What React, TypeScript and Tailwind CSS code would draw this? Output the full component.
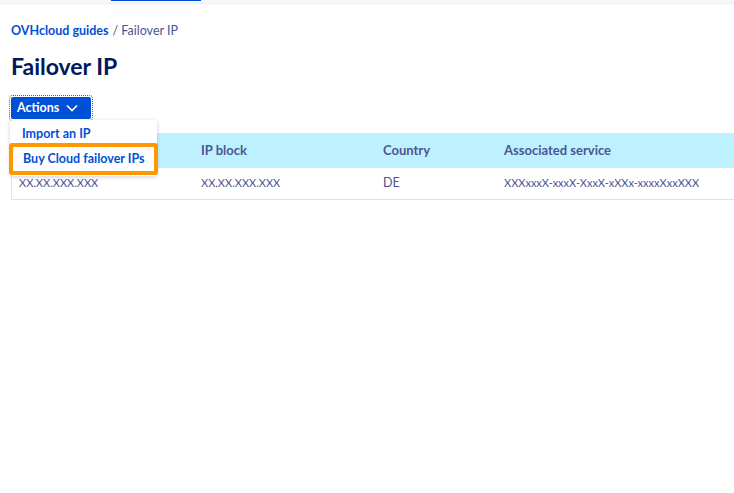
import React from "react";

const cols = [
  { label: "IP", w: "w-[182px]" },
  { label: "IP block", w: "w-[182px]" },
  { label: "Country", w: "w-[121px]" },
  { label: "Associated service", w: "" },
];

const row = ["XX.XX.XXX.XXX", "XX.XX.XXX.XXX", "DE", "XXXxxxX-xxxX-XxxX-xXXx-xxxxXxxXXX"];

export default function App() {
  return (
    <div className="w-[734px] h-[493px] bg-white overflow-hidden font-['Lato',sans-serif] text-[#4d5592]">
      <div className="h-[3px] shadow-[0_1px_2px_rgba(0,0,50,0.08)] bg-[#f7f7fb]">
        <div className="ml-[111px] w-[90px] h-[1px] bg-[#0050d7]" />
      </div>
      <div className="pl-[11px]">
        <div className="mt-[20px] text-[12.5px] leading-[16px]">
          <span className="font-bold text-[#0050d7]">OVHcloud guides</span>
          <span className="ml-[4px]">/ Failover IP</span>
        </div>
        <h1 className="mt-[13px] text-[23px] leading-[28px] font-bold text-[#00185e]">Failover IP</h1>
        <div className="relative mt-[17px]">
          <button className="h-[22px] w-[80px] flex items-center gap-[7px] pl-[6px] bg-[#0050d7] text-white text-[12.5px] font-bold rounded-[2px] outline-1 outline-dotted outline-[#2e7d32] outline-offset-[1px]">
            Actions
            <svg width="12" height="8" viewBox="0 0 12 8" fill="none">
              <path d="M1 1.5l5 5 5-5" stroke="white" strokeWidth="1.6" />
            </svg>
          </button>
          <div className="absolute left-[-1px] top-[23px] z-10 w-[147px] bg-white rounded-[3px] shadow-[0_1px_4px_rgba(0,0,60,0.2)] pt-[3px] pb-[1px]">
            <div className="h-[21px] pl-[12px] text-[12.5px] font-bold text-[#0050d7] leading-[21px]">Import an IP</div>
            <div className="mt-[-1px] ml-[-1px] w-[149px] border-[4px] border-[#ff9800] rounded-[3px] h-[32px] pl-[10px]">
              <div className="h-[24px] bg-white text-[12.5px] font-bold text-[#0050d7] leading-[24px]">Buy Cloud failover IPs</div>
            </div>
          </div>
          <div className="mt-[14px] border-l border-[#bef1ff]">
            <div className="flex h-[35px] items-center bg-[#bef1ff] text-[13px] font-bold">
              {cols.map((c) => (
                <div key={c.label} className={`${c.w} pl-[7px]`}>{c.label}</div>
              ))}
            </div>
            <div className="flex h-[32px] items-center border-b border-[#bef1ff] text-[11px]">
              {row.map((t, i) => (
                <div key={i} className={`${cols[i].w} pl-[7px] ${i === 2 ? "text-[12.5px]" : ""}`}>{t}</div>
              ))}
            </div>
          </div>
        </div>
      </div>
    </div>
  );
}
